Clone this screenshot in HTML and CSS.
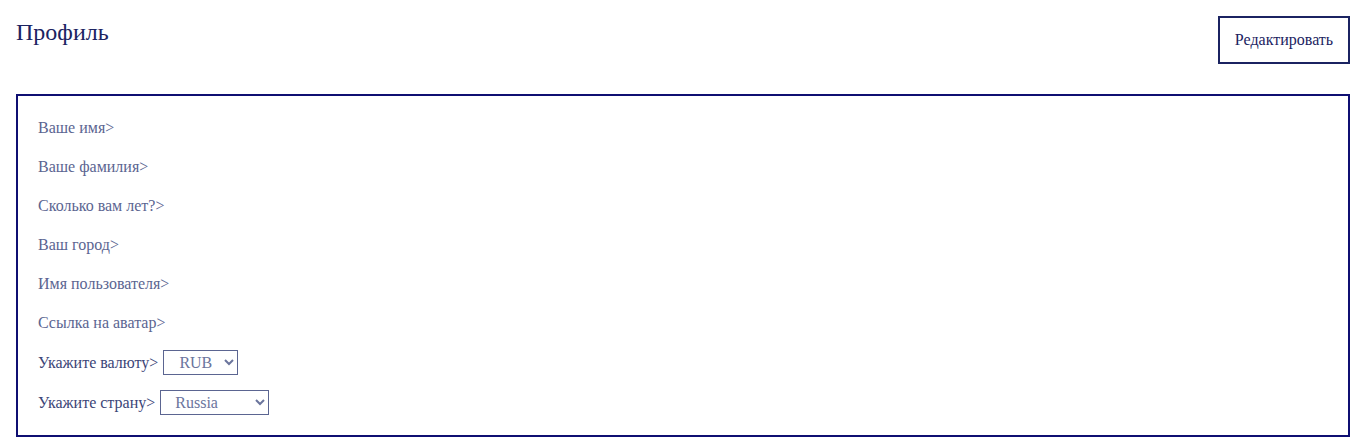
FILE: index.html
```html
<!DOCTYPE html>
<html lang="ru">
<head>
<meta charset="utf-8">
<title>Профиль</title>
<link rel="stylesheet" href="styles.css">
</head>
<body>
<div class="page">
  <header class="header">
    <h1 class="title">Профиль</h1>
    <button class="edit-btn" type="button">Редактировать</button>
  </header>
  <section class="card">
    <div class="fields">
      <div class="field">Ваше имя&gt;</div>
      <div class="field">Ваше фамилия&gt;</div>
      <div class="field">Сколько вам лет?&gt;</div>
      <div class="field">Ваш город&gt;</div>
      <div class="field">Имя пользователя&gt;</div>
      <div class="field">Ссылка на аватар&gt;</div>
    </div>
    <div class="settings">
      <label class="setting">Укажите валюту&gt; <select class="select select-currency"><option>RUB</option><option>USD</option></select></label>
      <label class="setting">Укажите страну&gt; <select class="select select-country"><option>Russia</option><option>USA</option></select></label>
    </div>
  </section>
</div>
</body>
</html>
```

FILE: styles.css
```css
html, body {
  margin: 0;
  padding: 0;
  background: #ffffff;
}
body {
  font-family: "Liberation Serif", "Times New Roman", serif;
  font-size: 16px;
}
.page {
  padding: 16px 0 0 16px;
}
.header {
  display: flex;
  justify-content: space-between;
  align-items: flex-start;
  height: 48px;
}
.title {
  margin: 0;
  padding-top: 2px;
  font-size: 24px;
  font-weight: normal;
  line-height: 28px;
  color: #1b2361;
}
.edit-btn {
  width: 132px;
  height: 48px;
  box-sizing: border-box;
  border: 2px solid #1b2361;
  background: #ffffff;
  color: #1b2361;
  font-family: "Liberation Serif", "Times New Roman", serif;
  font-size: 16px;
  padding: 0;
}
.card {
  margin-top: 30px;
  border: 2px solid #0f0f72;
  padding: 22px 20px 20px 20px;
}
.fields {
  display: flex;
  flex-direction: column;
  gap: 20px;
}
.field {
  line-height: 19px;
  height: 19px;
  color: #5b6591;
}
.settings {
  display: flex;
  flex-direction: column;
  gap: 15px;
  margin-top: 18px;
}
.setting {
  display: flex;
  align-items: center;
  gap: 5px;
  height: 25px;
  color: #3b4577;
}
.select {
  height: 25px;
  box-sizing: border-box;
  border: 1px solid #5b6591;
  border-radius: 0;
  background: #ffffff;
  color: #6b759d;
  font-family: "Liberation Serif", "Times New Roman", serif;
  font-size: 16px;
  padding: 0 4px 0 11px;
}
.select-currency {
  width: 75px;
}
.select-country {
  width: 109px;
  padding-left: 10px;
}
```
